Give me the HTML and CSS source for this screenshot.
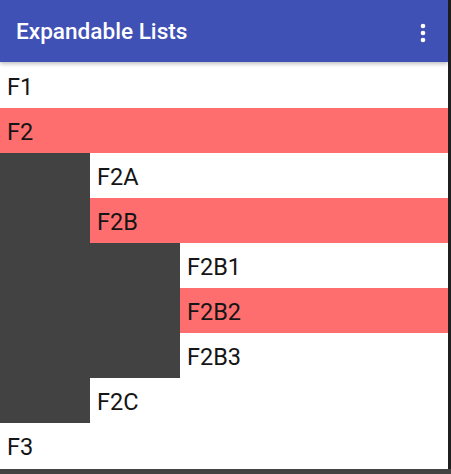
FILE: index.html
```html
<!DOCTYPE html>
<html>
<head>
<meta charset="utf-8">
<link rel="stylesheet" href="styles.css">
</head>
<body>
<div class="device">
  <div class="main">
    <div class="screen">
      <header class="appbar">
        <span class="title">Expandable Lists</span>
        <svg class="menu" width="8" height="22" viewBox="0 0 8 22"><circle cx="4" cy="4" r="2.3" fill="#fff"/><circle cx="4" cy="11" r="2.3" fill="#fff"/><circle cx="4" cy="18" r="2.3" fill="#fff"/></svg>
      </header>
      <div class="list">
        <div class="row first">F1</div>
        <div class="row selected">F2</div>
        <div class="children">
          <div class="row">F2A</div>
          <div class="row selected">F2B</div>
          <div class="children">
            <div class="row">F2B1</div>
            <div class="row selected">F2B2</div>
            <div class="row">F2B3</div>
          </div>
          <div class="row">F2C</div>
        </div>
        <div class="row">F3</div>
      </div>
    </div>
    <div class="edge"></div>
  </div>
  <div class="bottom"></div>
</div>
</body>
</html>
```
FILE: styles.css
```css
html, body {
  margin: 0;
  padding: 0;
  background: #424242;
}
.device {
  width: 451px;
  height: 474px;
  display: flex;
  flex-direction: column;
  overflow: hidden;
}
.main {
  display: flex;
  height: 469px;
}
.screen {
  width: 448px;
  height: 469px;
  background: #fff;
  display: flex;
  flex-direction: column;
  font-family: Roboto, "Liberation Sans", sans-serif;
}
.edge {
  width: 3px;
  background: #1f1f1f;
}
.bottom {
  flex: 1;
  background: #424242;
}
.appbar {
  height: 62px;
  flex: 0 0 62px;
  background: #3f51b5;
  display: flex;
  align-items: center;
  justify-content: space-between;
  padding: 0 21px 0 16px;
  box-shadow: 0 2px 4px rgba(0,0,0,0.25);
  position: relative;
  z-index: 1;
}
.title {
  color: #fff;
  font-size: 22.6px;
  font-weight: 500;
  padding-top: 1px;
}
.menu {
  display: block;
  margin-top: 3px;
}
.list {
  display: flex;
  flex-direction: column;
}
.row {
  height: 45px;
  display: flex;
  align-items: center;
  padding-left: 7px;
  font-size: 23.5px;
  color: #151515;
  background: #fff;
  padding-top: 3px;
  box-sizing: border-box;
}
.row.first {
  height: 46px;
  padding-top: 4px;
}
.row.selected {
  background: #ff6e6e;
}
.children {
  padding-left: 90px;
  background: #424242;
  display: flex;
  flex-direction: column;
}
```
